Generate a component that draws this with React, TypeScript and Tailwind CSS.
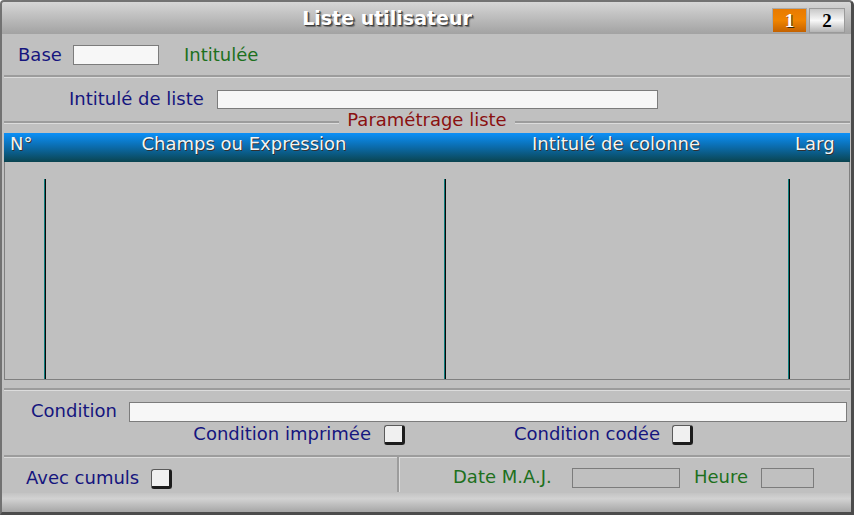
import React from 'react';

const font = "font-['DejaVu_Sans',Verdana,sans-serif]";

const Groove: React.FC<{ className?: string }> = ({ className = '' }) => (
  <div className={`flex flex-col ${className}`}>
    <div className="h-[2px] bg-[#9c9c9c]"></div>
    <div className="h-[1px] bg-[#dcdcdc]"></div>
  </div>
);

const Field: React.FC<{ className: string; filled?: boolean }> = ({ className, filled = true }) => (
  <div className={`border border-[#7c7c7c] ${filled ? 'bg-[#f7f7f7]' : 'bg-transparent'} ${className}`}></div>
);

const CheckBox: React.FC<{ className?: string }> = ({ className = '' }) => (
  <div
    className={`w-[21px] h-[20px] shrink-0 rounded-[3px] bg-[#f0f0f0] border border-[#5a5a5a] border-r-[3px] border-b-[3px] border-r-[#1c1c1c] border-b-[#1c1c1c] ${className}`}
  ></div>
);

const ColLine: React.FC = () => (
  <div className="w-[2px] h-full bg-[linear-gradient(90deg,#0a7c7c_50%,#0a0a0a_50%)]"></div>
);

export default function App() {
  return (
    <div
      className={`w-[854px] h-[515px] flex flex-col bg-[#c0c0c0] border-l-2 border-t-2 border-[#727272] border-r-[3px] border-b-[3px] border-r-[#4c4c4c] border-b-[#4c4c4c] rounded-tl-[4px] rounded-tr-[5px] overflow-hidden text-[18px] leading-[18px] ${font}`}
    >
      {/* Title bar */}
      <div className="h-[32px] flex items-start bg-[linear-gradient(180deg,#d6d6d6,#a2a2a2)]">
        <div className="flex-1 h-full flex items-center justify-center">
          <span className="font-bold text-[19px] text-white [text-shadow:1px_1px_0_#3c3c3c,2px_2px_1px_#6a6a6a]">
            Liste utilisateur
          </span>
        </div>
        <div className="flex gap-[2px] mt-[6px] mr-[6px] font-['Liberation_Serif',serif] font-bold text-[19px]">
          <div className="w-[35px] h-[25px] flex items-center justify-center border border-[#a8a8a8] bg-[linear-gradient(180deg,#e87a00,#f08400_50%,#c46200)] text-white [text-shadow:1px_1px_0_#3a2a10]">
            1
          </div>
          <div className="w-[36px] h-[25px] flex items-center justify-center border border-[#9a9a9a] bg-[linear-gradient(180deg,#c8c8c8,#f8f8f8_50%,#b4b4b4)] text-black">
            2
          </div>
        </div>
      </div>

      {/* Base */}
      <div className="h-[41px] flex items-center pl-[16px]">
        <span className="w-[55px] text-[#15157e]">Base</span>
        <Field className="w-[86px] h-[20px]" />
        <span className="ml-[25px] text-[#1d701d]">Intitulée</span>
      </div>
      <Groove className="ml-[2px] mr-[1px]" />

      {/* Intitulé de liste */}
      <div className="h-[38px] flex items-center pl-[67px] pt-[4px]">
        <span className="w-[148px] text-[#15157e] whitespace-nowrap">Intitulé de liste</span>
        <Field className="w-[441px] h-[19px]" />
      </div>

      {/* Paramétrage liste */}
      <div className="h-[12px] flex items-center ml-[2px] mr-[1px]">
        <Groove className="flex-1" />
        <span className="px-[8px] mb-[5px] text-[#8a1010] whitespace-nowrap">Paramétrage liste</span>
        <Groove className="flex-1" />
      </div>

      {/* Table */}
      <div className="mt-[5px] ml-[2px] mr-[1px] flex flex-col">
        <div className="h-[29px] grid grid-cols-[40px_400px_344px_1fr] bg-[linear-gradient(180deg,#0c90f8,#0b6aa8_50%,#0a4450)] text-[#f4f4f4] [text-shadow:1px_1px_0_#303030] pt-[2px]">
          <span className="pl-[6px]">N°</span>
          <span className="text-center">Champs ou Expression</span>
          <span className="text-center">Intitulé de colonne</span>
          <span className="pl-[7px]">Larg</span>
        </div>
        <div className="h-[218px] grid grid-cols-[39px_400px_344px_1fr] border-l border-r border-b border-[#808080] pt-[17px]">
          <div></div>
          <ColLine />
          <ColLine />
          <ColLine />
        </div>
      </div>

      <Groove className="mt-[8px] ml-[2px] mr-[1px]" />

      {/* Condition */}
      <div className="h-[64px] flex flex-col pt-[11px]">
        <div className="flex items-center pl-[29px]">
          <span className="w-[98px] text-[#15157e] -mt-[2px]">Condition</span>
          <Field className="w-[718px] h-[20px]" />
        </div>
        <div className="flex items-center mt-[3px] h-[20px]">
          <span className="w-[369px] text-right text-[#15157e] whitespace-nowrap -mt-[2px]">Condition imprimée</span>
          <CheckBox className="ml-[13px]" />
          <span className="w-[255px] text-right text-[#15157e] whitespace-nowrap -mt-[2px]">Condition codée</span>
          <CheckBox className="ml-[12px]" />
        </div>
      </div>

      <Groove className="ml-[2px] mr-[1px]" />

      {/* Bottom row */}
      <div className="h-[35px] flex">
        <div className="w-[395px] flex items-center pl-[24px] pt-[6px]">
          <span className="w-[125px] text-[#15157e] whitespace-nowrap -mt-[2px]">Avec cumuls</span>
          <CheckBox />
        </div>
        <div className="flex h-full -mt-[1px]">
          <div className="w-[2px] bg-[#9c9c9c]"></div>
          <div className="w-[1px] bg-[#dcdcdc]"></div>
        </div>
        <div className="flex-1 flex items-center pl-[53px] pt-[5px]">
          <span className="w-[119px] text-[#1d701d] whitespace-nowrap -mt-[2px]">Date M.A.J.</span>
          <Field className="w-[108px] h-[20px]" filled={false} />
          <span className="ml-[14px] w-[67px] text-[#1d701d] -mt-[2px]">Heure</span>
          <Field className="w-[53px] h-[20px]" filled={false} />
        </div>
      </div>

      {/* Footer */}
      <div className="h-[19px] bg-[linear-gradient(180deg,#c4c4c4,#d2d2d2_30%,#a6a6a6)]"></div>
    </div>
  );
}
